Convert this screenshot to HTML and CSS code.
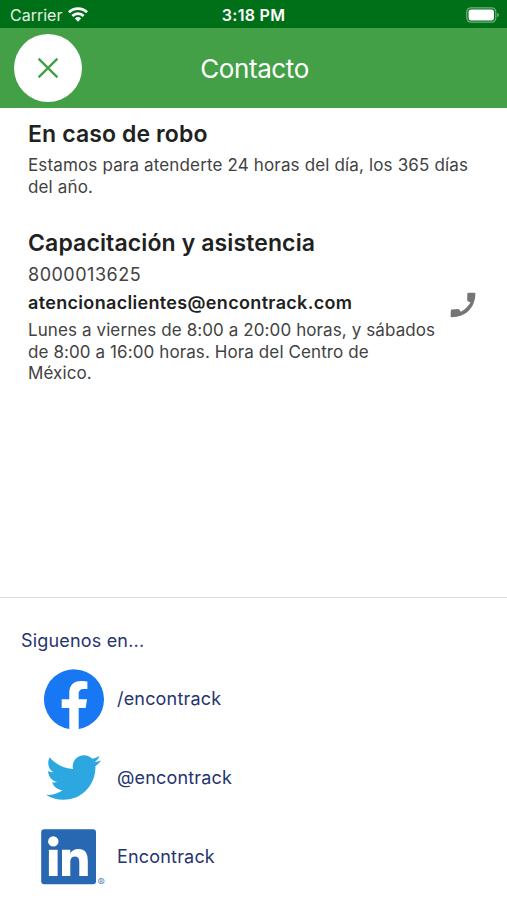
FILE: index.html
```html
<!DOCTYPE html>
<html lang="es">
<head>
    <meta charset="UTF-8">
    <meta name="viewport" content="width=device-width, initial-scale=1.0">
    <title>Contacto</title>
    <link rel="stylesheet" href="styles.css">
</head>
<body>
    <div class="status-bar">
        <div class="status-left">
            <span class="carrier">Carrier</span>
            <svg class="wifi" viewBox="0 0 20 15" width="20" height="15">
                <g fill="none" stroke="#fff" stroke-width="2.8">
                    <path d="M1 5.3a12.8 12.8 0 0 1 18 0"/>
                    <path d="M4.4 8.9a8 8 0 0 1 11.2 0"/>
                </g>
                <path d="M6.9 11.5a4.5 4.5 0 0 1 6.2 0L10 14.7z" fill="#fff"/>
            </svg>
        </div>
        <span class="clock">3:18 PM</span>
        <div class="status-right">
            <svg class="battery" viewBox="0 0 34 16" width="34" height="16">
                <rect x=".8" y=".8" width="29" height="14.4" rx="4.2" fill="none" stroke="#fff" stroke-opacity=".45" stroke-width="1.2"/>
                <rect x="2.6" y="2.6" width="25.4" height="10.8" rx="2.6" fill="#fff"/>
                <path d="M31.4 5.7q1.5.8 1.5 2.3t-1.5 2.3z" fill="#fff" fill-opacity=".5"/>
            </svg>
        </div>
    </div>

    <header class="header">
        <button class="close-btn" aria-label="Cerrar">
            <svg viewBox="0 0 20 20" width="20" height="20">
                <path d="M1.3 1.3l17.4 17.4M18.7 1.3L1.3 18.7" fill="none" stroke="#43a047" stroke-width="2.4" stroke-linecap="round"/>
            </svg>
        </button>
        <h1>Contacto</h1>
    </header>

    <main class="content">
        <section class="block">
            <h2 class="robo-title">En caso de robo</h2>
            <p>Estamos para atenderte 24 horas del día, los 365 días del año.</p>
        </section>

        <section class="block support">
            <div class="support-info">
                <h2>Capacitación y asistencia</h2>
                <div class="phone">8000013625</div>
                <div class="email">atencionaclientes@encontrack.com</div>
                <p class="schedule">Lunes a viernes de 8:00 a 20:00 horas, y sábados de 8:00 a 16:00 horas. Hora del Centro de México.</p>
            </div>
            <svg class="call-icon" viewBox="0 0 26 26" width="26" height="26">
                <path d="M18.4.8Q17.3.9 17.3 2L17.2 8.3Q17.3 9 17.9 9.2l2.6 1.3Q17 16.4 10.8 19.8L9.2 17.4Q8.8 16.8 8.1 16.9L1.8 17.6Q.9 17.7.8 18.6L.6 24.2Q.6 25.2 1.6 25.2C15.8 25.2 25.2 15.8 25.4 1.8Q25.4.8 24.4.8z" fill="#757575"/>
            </svg>
        </section>
    </main>

    <footer class="social">
        <div class="social-title">Siguenos en...</div>
        <ul class="social-list">
            <li>
                <svg class="logo facebook" viewBox="0 0 60 60" width="60" height="60">
                    <path d="M60 30.2A30 30 0 1 0 25.3 60V39H17.7V30.2h7.6v-6.6c0-7.6 4.5-11.7 11.4-11.7 3.2 0 6.7.6 6.7.6v7.4h-3.8c-3.7 0-4.9 2.3-4.9 4.7v5.6h8.3L41.7 39h-7V60A30 30 0 0 0 60 30.2z" fill="#1877f2"/>
                </svg>
                <span>/encontrack</span>
            </li>
            <li>
                <svg class="logo twitter" viewBox="0 0 24 24" width="55" height="55">
                    <path d="M23.954 4.569c-.885.389-1.83.654-2.825.775 1.014-.611 1.794-1.574 2.163-2.723-.951.555-2.005.959-3.127 1.184-.896-.959-2.173-1.559-3.591-1.559-2.717 0-4.92 2.203-4.92 4.917 0 .39.045.765.127 1.124C7.691 8.094 4.066 6.13 1.64 3.161c-.427.722-.666 1.561-.666 2.475 0 1.71.87 3.213 2.188 4.096-.807-.026-1.566-.248-2.228-.616v.061c0 2.385 1.693 4.374 3.946 4.827-.413.111-.849.171-1.296.171-.314 0-.615-.03-.916-.086.631 1.953 2.445 3.377 4.604 3.417-1.68 1.319-3.809 2.105-6.102 2.105-.39 0-.779-.023-1.17-.067 2.189 1.394 4.768 2.209 7.557 2.209 9.054 0 13.999-7.496 13.999-13.986 0-.209 0-.42-.015-.63.961-.689 1.8-1.56 2.46-2.548z" fill="#2ca7e0"/>
                </svg>
                <span>@encontrack</span>
            </li>
            <li>
                <svg class="logo linkedin" viewBox="0 -5 72 70" width="72" height="70">
                    <rect x=".2" y="2.2" width="54.8" height="55" rx="3" fill="#2867b2"/>
                    <g fill="#fff">
                        <circle cx="12.3" cy="14.4" r="5.2"/>
                        <rect x="7.9" y="22.8" width="8.7" height="26.2"/>
                        <path d="M21 22.8h8.3v3.6c1.4-2.6 4.2-4.3 8-4.3 8 0 9.5 5.5 9.5 12.4V49h-8.5V36.3c0-3.2-.2-6.9-4.3-6.9s-4.7 3.2-4.7 6.7V49H21z"/>
                    </g>
                    <text x="56.4" y="58.6" class="registered">®</text>
                </svg>
                <span>Encontrack</span>
            </li>
        </ul>
    </footer>
</body>
</html>
```
FILE: styles.css
```css
* {
    margin: 0;
    padding: 0;
    box-sizing: border-box;
}

body {
    font-family: Inter, 'Liberation Sans', sans-serif;
    background-color: #fff;
    color: #212121;
    height: 900px;
    display: flex;
    flex-direction: column;
    overflow: hidden;
}

.status-bar {
    height: 28px;
    padding: 1px 7px 0 10px;
    display: grid;
    grid-template-columns: 1fr auto 1fr;
    align-items: center;
    background-color: #007018;
    color: #fff;
    font-size: 16px;
}

.status-left {
    display: flex;
    align-items: center;
    gap: 6px;
}

.carrier {
    opacity: 0.9;
}

.clock {
    margin-right: 3px;
    font-weight: 600;
    letter-spacing: 0.3px;
}

.status-right {
    display: flex;
    justify-content: flex-end;
}

.header {
    height: 80px;
    padding: 0 12px 0 14px;
    display: grid;
    grid-template-columns: 68px 1fr 68px;
    align-items: center;
    background-color: #43a047;
}

.header h1 {
    color: #fff;
    font-size: 26px;
    font-weight: 400;
    letter-spacing: -0.4px;
    text-align: center;
}

.close-btn {
    width: 68px;
    height: 68px;
    border: none;
    border-radius: 50%;
    background-color: #fff;
    display: flex;
    align-items: center;
    justify-content: center;
    cursor: pointer;
}

.content {
    flex: 1;
    padding: 11px 28px 0;
}

h2 {
    font-size: 23px;
    line-height: 30px;
    font-weight: 600;
    letter-spacing: 0.12px;
}

.block p {
    color: #424242;
    font-size: 17px;
    line-height: 21.5px;
    letter-spacing: 0.15px;
}

.block .robo-title {
    margin-bottom: 6px;
}

.support {
    margin-top: 30px;
    display: flex;
    align-items: center;
    justify-content: space-between;
}

.support-info {
    width: 408px;
}

.phone {
    margin-top: 4px;
    color: #424242;
    font-size: 18px;
    line-height: 25px;
    letter-spacing: 0.5px;
}

.email {
    margin: 3px 0 5px;
    font-size: 18px;
    line-height: 25px;
    font-weight: 600;
    letter-spacing: 0.33px;
}

.block .schedule {
    letter-spacing: 0.1px;
}

.call-icon {
    margin: 0 3px 3px 0;
}

.social {
    height: 303px;
    border-top: 1px solid #dcdcdc;
    padding: 30px 21px 0;
    color: #26346f;
    font-size: 18px;
    letter-spacing: 0.18px;
}

.social-title {
    line-height: 26px;
}

.social-list {
    margin-top: 5px;
    list-style: none;
}

.social-list li {
    height: 79px;
    display: grid;
    grid-template-columns: 96px 1fr;
    align-items: center;
}

.facebook {
    margin-left: 23px;
}

.twitter {
    margin-left: 25px;
}

.linkedin {
    margin-left: 20px;
}

.registered {
    font-size: 11px;
    fill: #2867b2;
    fill-opacity: 0.8;
}
```
